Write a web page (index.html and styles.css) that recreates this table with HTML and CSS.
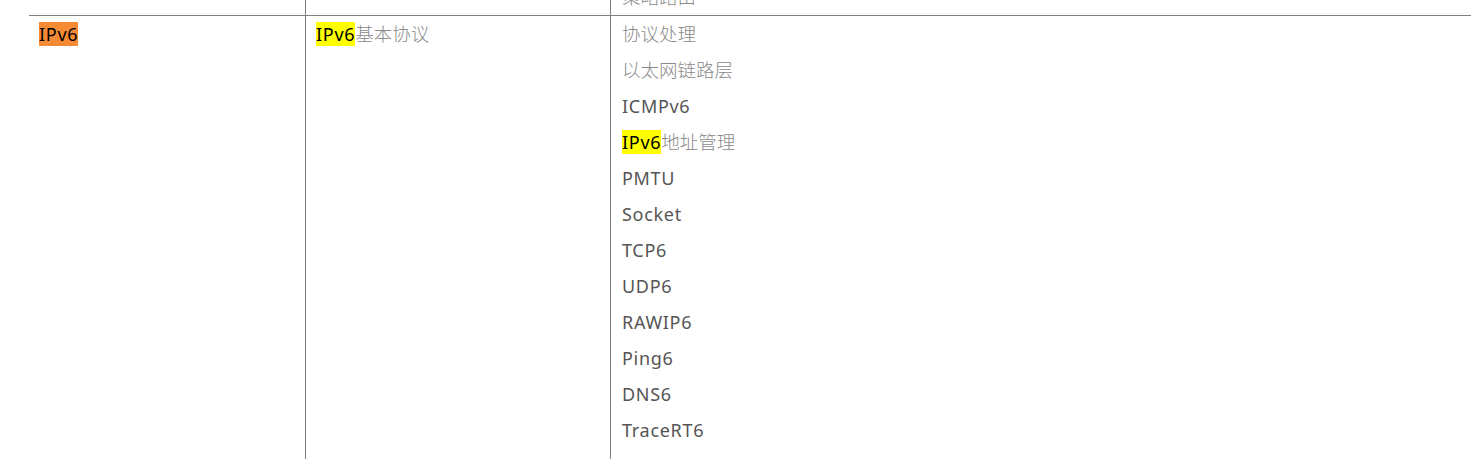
FILE: index.html
```html
<!DOCTYPE html>
<html lang="zh">
<head>
<meta charset="utf-8">
<title>IPv6</title>
<link rel="stylesheet" href="styles.css">
</head>
<body>
<div class="table">
  <div class="row prev">
    <div class="cell c1"></div>
    <div class="cell c2"></div>
    <div class="cell c3"><div class="item"><span class="zh">策略路由</span></div></div>
  </div>
  <div class="row">
    <div class="cell c1"><div class="item"><span class="hl-orange">IPv6</span></div></div>
    <div class="cell c2"><div class="item"><span class="hl-yellow">IPv6</span><span class="zh">基本协议</span></div></div>
    <div class="cell c3">
      <div class="item"><span class="zh">协议处理</span></div>
      <div class="item"><span class="zh">以太网链路层</span></div>
      <div class="item">ICMPv6</div>
      <div class="item"><span class="hl-yellow">IPv6</span><span class="zh">地址管理</span></div>
      <div class="item">PMTU</div>
      <div class="item">Socket</div>
      <div class="item">TCP6</div>
      <div class="item">UDP6</div>
      <div class="item">RAWIP6</div>
      <div class="item">Ping6</div>
      <div class="item">DNS6</div>
      <div class="item">TraceRT6</div>
      <div class="item">Telnet6</div>
    </div>
  </div>
</div>
</body>
</html>
```

FILE: styles.css
```css
html, body {
  margin: 0;
  padding: 0;
  overflow: hidden;
  background: #ffffff;
}

body {
  font-family: "Noto Sans", "Noto Sans CJK SC", sans-serif;
  font-size: 18px;
  color: #555555;
}

.table {
  margin-left: 29px;
  margin-top: -21px;
}

.row {
  display: grid;
  grid-template-columns: 276px 305px 1fr;
}

.row + .row {
  border-top: 1px solid #808080;
}

.cell {
  padding: 0 10px;
}

.c2, .c3 {
  border-left: 1px solid #808080;
}

.c3 {
  padding-left: 11px;
}

.item {
  height: 36px;
  line-height: 36px;
  white-space: nowrap;
  letter-spacing: 0.7px;
}

.zh {
  font-family: "Noto Sans CJK SC", sans-serif;
  font-size: 18.5px;
  font-weight: 300;
  line-height: 1;
  letter-spacing: 0;
  color: #8a8a8a;
}

.hl-orange {
  background: #f68a35;
  color: #000000;
}

.hl-yellow {
  background: #ffff00;
  color: #000000;
}
```
